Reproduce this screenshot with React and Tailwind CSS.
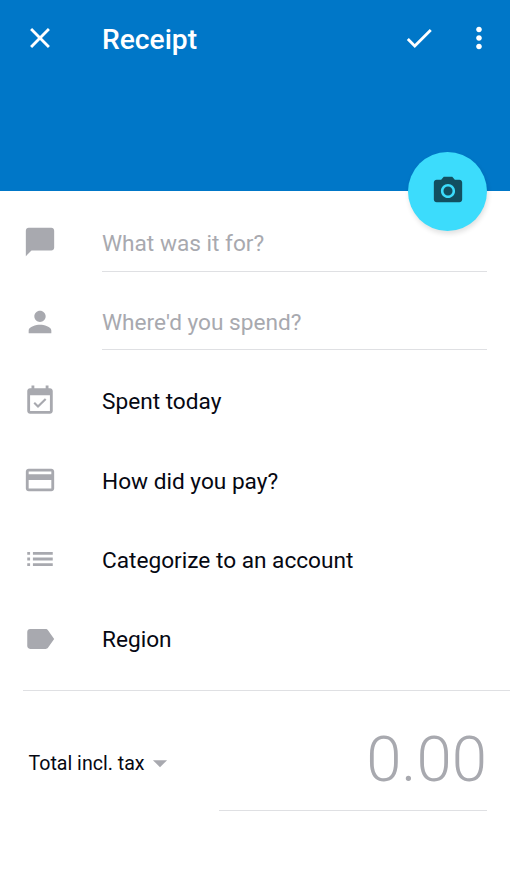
import React from "react";

const ICONS = {
    close: "M19 6.41 17.59 5 12 10.59 6.41 5 5 6.41 10.59 12 5 17.59 6.41 19 12 13.41 17.59 19 19 17.59 13.41 12z",
    check: "M9 16.17 4.83 12l-1.42 1.41L9 19 21 7l-1.41-1.41z",
    more: "M12 8c1.1 0 2-.9 2-2s-.9-2-2-2-2 .9-2 2 .9 2 2 2zm0 2c-1.1 0-2 .9-2 2s.9 2 2 2 2-.9 2-2-.9-2-2-2zm0 6c-1.1 0-2 .9-2 2s.9 2 2 2 2-.9 2-2-.9-2-2-2z",
    camera: "M12 8.8a3.2 3.2 0 1 0 0 6.4 3.2 3.2 0 1 0 0-6.4zM9 2 7.17 4H4c-1.1 0-2 .9-2 2v12c0 1.1.9 2 2 2h16c1.1 0 2-.9 2-2V6c0-1.1-.9-2-2-2h-3.17L15 2H9zm3 15c-2.76 0-5-2.24-5-5s2.24-5 5-5 5 2.24 5 5-2.24 5-5 5z",
    chat: "M20 2H4c-1.1 0-2 .9-2 2v18l4-4h14c1.1 0 2-.9 2-2V4c0-1.1-.9-2-2-2z",
    person: "M12 12c2.21 0 4-1.79 4-4s-1.79-4-4-4-4 1.79-4 4 1.79 4 4 4zm0 2c-2.67 0-8 1.34-8 4v2h16v-2c0-2.66-5.33-4-8-4z",
    calendar:
        "M16.53 11.06 15.47 10l-4.88 4.88-2.12-2.12-1.06 1.06L10.59 17l5.94-5.94zM19 3h-1V1h-2v2H8V1H6v2H5c-1.11 0-1.99.9-1.99 2L3 19c0 1.1.89 2 2 2h14c1.1 0 2-.9 2-2V5c0-1.1-.9-2-2-2zm0 16H5V8h14v11z",
    card: "M20 4H4c-1.11 0-1.99.89-1.99 2L2 18c0 1.11.89 2 2 2h16c1.11 0 2-.89 2-2V6c0-1.11-.89-2-2-2zm0 14H4v-6h16v6zm0-10H4V6h16v2z",
    list: "M3 13h2v-2H3v2zm0 4h2v-2H3v2zm0-8h2V7H3v2zm4 4h14v-2H7v2zm0 4h14v-2H7v2zM7 7v2h14V7H7z",
    label: "M17.63 5.84C17.27 5.33 16.67 5 16 5L5 5.01C3.9 5.01 3 5.9 3 7v10c0 1.1.9 1.99 2 1.99L16 19c.67 0 1.27-.33 1.63-.84L22 12l-4.37-6.16z",
    arrow: "M7 10l5 5 5-5z",
};

function Icon({ name, className }) {
    return (
        <svg
            viewBox="0 0 24 24"
            fill="currentColor"
            className={`w-[34px] h-[34px] shrink-0 ${className || ""}`}
        >
            <path d={ICONS[name]} />
        </svg>
    );
}

const fields = [
    {
        icon: "chat",
        placeholder: "What was it for?",
        height: "h-[59px]",
        iconClass: "mb-0.5",
    },
    { icon: "person", placeholder: "Where'd you spend?", height: "h-[57px]" },
];

const options = [
    { icon: "calendar", label: "Spent today" },
    { icon: "card", label: "How did you pay?" },
    { icon: "list", label: "Categorize to an account" },
    { icon: "label", label: "Region" },
];

export default function App() {
    return (
        <div className="w-full h-[871px] bg-white overflow-hidden font-[Roboto,sans-serif] text-[#060812]">
            <header className="relative h-[191px] bg-[#0077c8] text-white">
                <div className="flex items-center h-[76px] pl-[22.5px] pr-[14px]">
                    <button type="button">
                        <Icon name="close" />
                    </button>
                    <h1 className="ml-[45.5px] pt-[5px] flex-1 text-[28.2px] font-medium leading-none">
                        Receipt
                    </h1>
                    <button type="button" className="mr-[26px]">
                        <Icon name="check" />
                    </button>
                    <button type="button">
                        <Icon name="more" />
                    </button>
                </div>
                <button
                    type="button"
                    className="absolute right-[23px] -bottom-10 flex items-center justify-center w-[79px] h-[79px] rounded-full bg-[#3cdcfc] text-[#124f60] shadow-[1px_3px_5px_rgba(0,0,0,0.12)]"
                >
                    <Icon name="camera" className="mb-0.5" />
                </button>
            </header>

            <main className="pt-3">
                {fields.map((field) => (
                    <div
                        key={field.icon}
                        className="flex items-center h-[79px] px-[23px] text-[#a8a9af]"
                    >
                        <Icon name={field.icon} className={field.iconClass} />
                        <div
                            className={`ml-[45px] flex-1 flex items-center pt-[3px] border-b border-[#dfe0e3] text-[22.65px] ${field.height}`}
                        >
                            {field.placeholder}
                        </div>
                    </div>
                ))}
                {options.map((option) => (
                    <div
                        key={option.icon}
                        className="flex items-center h-[79.4px] px-[23px]"
                    >
                        <Icon name={option.icon} className="text-[#a8a9af]" />
                        <span className="ml-[45px] pt-[3px] text-[22.65px]">
                            {option.label}
                        </span>
                    </div>
                ))}
            </main>

            <footer className="ml-[23px] mt-[11.4px] pr-[23px] flex items-start justify-between border-t border-[#dfe0e3]">
                <div className="flex items-center ml-[5.5px] mt-[55px] h-[34px] text-[19.6px]">
                    <span className="pt-0.5">Total incl. tax</span>
                    <Icon name="arrow" className="text-[#a8a9af] -ml-0.5" />
                </div>
                <div className="w-[268px] h-[120px] pt-[37px] border-b border-[#dfe0e3] text-right text-[63.5px] leading-[64px] font-light text-[#a8a9af]">
                    0.00
                </div>
            </footer>
        </div>
    );
}
